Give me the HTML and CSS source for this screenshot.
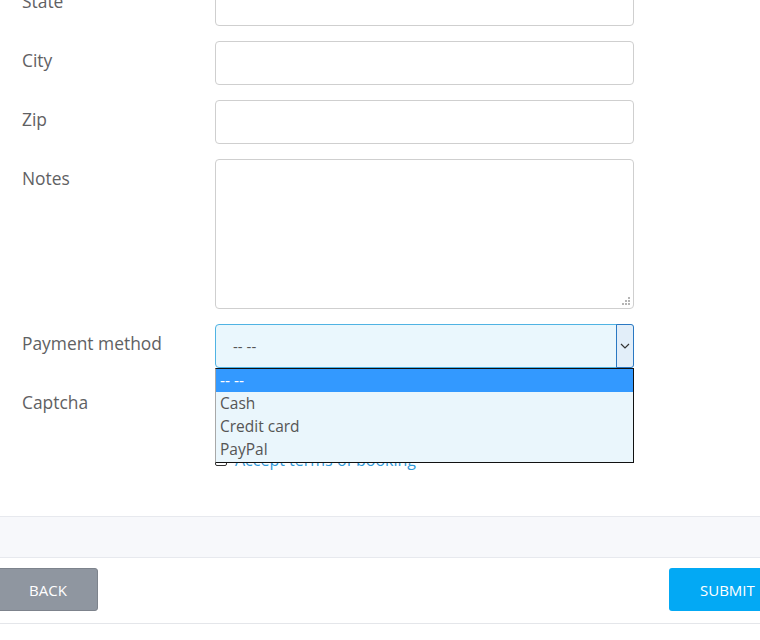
FILE: index.html
```html
<!DOCTYPE html>
<html>
<head>
<meta charset="utf-8">
<link rel="stylesheet" href="styles.css">
</head>
<body>
<div class="page">
  <form class="form">
    <div class="row">
      <label class="label">State</label>
      <div class="field"><div class="input"></div></div>
    </div>
    <div class="row">
      <label class="label">City</label>
      <div class="field"><div class="input"></div></div>
    </div>
    <div class="row">
      <label class="label">Zip</label>
      <div class="field"><div class="input"></div></div>
    </div>
    <div class="row">
      <label class="label">Notes</label>
      <div class="field">
        <div class="textarea">
          <svg class="grip" width="8" height="8" viewBox="0 0 8 8"><g fill="#b5b5b5"><rect x="6" y="0" width="2" height="2"/><rect x="3" y="3" width="2" height="2"/><rect x="6" y="3" width="2" height="2"/><rect x="0" y="6" width="2" height="2"/><rect x="3" y="6" width="2" height="2"/><rect x="6" y="6" width="2" height="2"/></g></svg>
        </div>
      </div>
    </div>
    <div class="row">
      <label class="label">Payment method</label>
      <div class="field">
        <div class="select">
          <span class="select-value">-- --</span>
          <span class="select-arrow">
            <svg width="10" height="6" viewBox="0 0 10 6"><path d="M1 1 L5 5 L9 1" fill="none" stroke="#333" stroke-width="1.2"/></svg>
          </span>
          <ul class="dropdown">
            <li class="opt opt-active">-- --</li>
            <li class="opt">Cash</li>
            <li class="opt">Credit card</li>
            <li class="opt">PayPal</li>
          </ul>
        </div>
      </div>
    </div>
    <div class="row row-captcha">
      <label class="label">Captcha</label>
      <div class="field"></div>
    </div>
    <div class="row row-terms">
      <div class="label-empty"></div>
      <div class="field terms">
        <span class="checkbox"></span>
        <a class="terms-link">Accept terms of booking</a>
      </div>
    </div>
  </form>
  <div class="band"></div>
  <div class="footer">
    <button class="btn btn-back" type="button">BACK</button>
    <button class="btn btn-submit" type="button">SUBMIT</button>
  </div>
</div>
</body>
</html>
```

FILE: styles.css
```css
* { box-sizing: border-box; }
html, body {
  margin: 0;
  padding: 0;
  background: #fff;
  font-family: "Open Sans", "Noto Sans", sans-serif;
  overflow: hidden;
}
.page {
  width: 760px;
  height: 640px;
  overflow: hidden;
}
.form {
  margin: -18px 0 0 0;
  padding: 0 0 0 22px;
  display: flex;
  flex-direction: column;
  gap: 15px;
}
.row {
  display: grid;
  grid-template-columns: 193px 419px;
}
.label {
  font-size: 17.4px;
  color: #5f6163;
  padding-top: 7px;
  line-height: 24px;
}
.field {
  position: relative;
}
.input {
  height: 44px;
  border: 1px solid #cfcfcf;
  border-radius: 4px;
  background: #fff;
}
.textarea {
  position: relative;
  height: 150px;
  border: 1px solid #cfcfcf;
  border-radius: 4px;
  background: #fff;
}
.grip {
  position: absolute;
  right: 3px;
  bottom: 3px;
}
.select {
  position: relative;
  height: 44px;
  border: 1px solid #4fb3e3;
  border-radius: 4px;
  background: #eaf7fd;
  display: flex;
  align-items: center;
}
.select-value {
  flex: 1;
  padding-left: 17px;
  font-size: 15px;
  color: #555;
}
.select-arrow {
  align-self: stretch;
  width: 18px;
  border: 1px solid #2a78c2;
  border-radius: 0 3px 3px 0;
  background: #e2eef9;
  display: flex;
  align-items: center;
  justify-content: center;
  margin: -1px -1px -1px 0;
}
.dropdown {
  position: absolute;
  top: 43px;
  left: -1px;
  width: 419px;
  height: 95px;
  margin: 0;
  padding: 0;
  list-style: none;
  background: #eaf6fc;
  border: 1px solid #111;
  border-left-color: #a8a8a8;
  z-index: 5;
}
.opt {
  height: 23px;
  line-height: 23px;
  padding-left: 4px;
  font-size: 15.5px;
  color: #555;
}
.opt-active {
  background: #3399ff;
  color: #fff;
}
.row-captcha {
  height: 50px;
}
.terms {
  display: flex;
  align-items: center;
  gap: 8px;
  height: 24px;
}
.checkbox {
  width: 12px;
  height: 12px;
  border: 1px solid #333;
  border-radius: 2px;
  background: #fff;
}
.terms-link {
  font-size: 16px;
  color: #3098d8;
}
.band {
  margin-top: 44px;
  height: 42px;
  background: #f7f8fb;
  border-top: 1px solid #e7e9ee;
  border-bottom: 1px solid #e7e9ee;
}
.footer {
  height: 66px;
  border-bottom: 1px solid #e4e6ea;
  display: flex;
  align-items: center;
  justify-content: space-between;
}
.btn {
  height: 43px;
  border: none;
  border-radius: 3px;
  font-family: "Open Sans", "Noto Sans", sans-serif;
  font-size: 15px;
  color: #fff;
  cursor: pointer;
}
.btn-back {
  width: 102px;
  margin-left: -4px;
  margin-top: -2px;
  background: #8f96a0;
  border: 1px solid #7d838c;
  padding-left: 8px;
}
.btn-submit {
  width: 102px;
  margin-right: -11px;
  margin-top: -2px;
  background: #03a9f4;
  text-align: left;
  padding-left: 31px;
}
```
